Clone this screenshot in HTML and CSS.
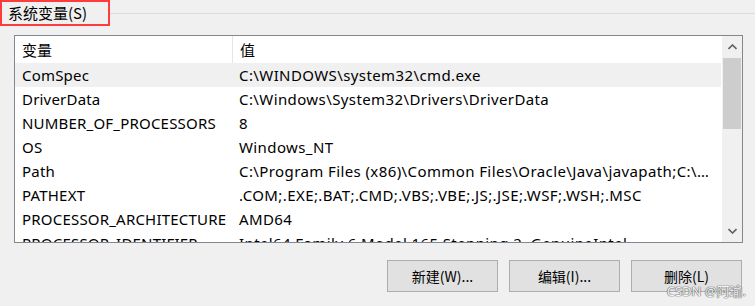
FILE: index.html
```html
<!DOCTYPE html>
<html>
<head>
    <title>系统变量</title>
    <link rel="stylesheet" href="styles.css">
</head>
<body>
    <div class="group-header">
        <span class="group-title">系统变量(S)</span>
        <span class="group-line"></span>
    </div>
    <div class="list">
        <div class="table">
            <div class="row head">
                <div class="cell name">变量</div>
                <div class="cell value">值</div>
            </div>
            <div class="row selected">
                <div class="cell name">ComSpec</div>
                <div class="cell value">C:\WINDOWS\system32\cmd.exe</div>
            </div>
            <div class="row">
                <div class="cell name">DriverData</div>
                <div class="cell value">C:\Windows\System32\Drivers\DriverData</div>
            </div>
            <div class="row">
                <div class="cell name">NUMBER_OF_PROCESSORS</div>
                <div class="cell value">8</div>
            </div>
            <div class="row">
                <div class="cell name">OS</div>
                <div class="cell value">Windows_NT</div>
            </div>
            <div class="row">
                <div class="cell name">Path</div>
                <div class="cell value">C:\Program Files (x86)\Common Files\Oracle\Java\javapath;C:\WINDOWS\system32;C:\WINDOWS</div>
            </div>
            <div class="row">
                <div class="cell name">PATHEXT</div>
                <div class="cell value">.COM;.EXE;.BAT;.CMD;.VBS;.VBE;.JS;.JSE;.WSF;.WSH;.MSC</div>
            </div>
            <div class="row">
                <div class="cell name">PROCESSOR_ARCHITECTURE</div>
                <div class="cell value">AMD64</div>
            </div>
            <div class="row">
                <div class="cell name">PROCESSOR_IDENTIFIER</div>
                <div class="cell value">Intel64 Family 6 Model 165 Stepping 2, GenuineIntel</div>
            </div>
        </div>
        <div class="scrollbar">
            <div class="arrow">
                <svg width="9" height="6" viewBox="0 0 9 6"><path d="M0.5 5 L4.5 1 L8.5 5" fill="none" stroke="#606060" stroke-width="1.6"/></svg>
            </div>
            <div class="thumb"></div>
            <div class="track"></div>
            <div class="arrow">
                <svg width="9" height="6" viewBox="0 0 9 6"><path d="M0.5 1 L4.5 5 L8.5 1" fill="none" stroke="#606060" stroke-width="1.6"/></svg>
            </div>
        </div>
    </div>
    <div class="buttons">
        <button class="btn">新建(W)...</button>
        <button class="btn">编辑(I)...</button>
        <button class="btn">删除(L)</button>
    </div>
    <div class="watermark">CSDN @阿瑜.</div>
</body>
</html>
```

FILE: styles.css
```css
body {
    margin: 0;
    background-color: #f0f0f0;
    font-family: "Noto Sans", "Noto Sans CJK SC", sans-serif;
    font-size: 15px;
    color: #000;
    width: 755px;
    height: 306px;
    overflow: hidden;
    position: relative;
}
.group-header {
    display: flex;
    align-items: center;
    height: 26px;
}
.group-title {
    box-sizing: border-box;
    height: 26px;
    width: 110px;
    padding-left: 6px;
    border: 2px solid #ff3b3b;
    line-height: 21px;
    font-family: "Noto Sans CJK SC", sans-serif;
    font-size: 15px;
}
.group-line {
    flex: 1;
    height: 1px;
    background-color: #dcdcdc;
}
.list {
    box-sizing: border-box;
    margin: 9px 0 0 14px;
    width: 729px;
    height: 208px;
    border: 1px solid #828790;
    background-color: #fff;
    display: flex;
    overflow: hidden;
}
.table {
    flex: 1;
    overflow: hidden;
    padding-right: 1px;
}
.row {
    display: flex;
    height: 24px;
    align-items: center;
    white-space: nowrap;
}
.row.head {
    height: 27px;
    font-family: "Noto Sans CJK SC", sans-serif;
}
.row.selected {
    background-color: #f0f0f0;
}
.cell {
    overflow: hidden;
}
.cell.name {
    width: 210px;
    padding-left: 7px;
    flex-shrink: 0;
    letter-spacing: 0.2px;
}
.cell.value {
    flex: 1;
    padding-left: 7px;
    padding-right: 6px;
    letter-spacing: 0.4px;
    text-overflow: ellipsis;
}
.row.head .cell {
    height: 27px;
    line-height: 27px;
    letter-spacing: 0;
}
.row.head .cell.name {
    border-right: 1px solid #e5e5e5;
}
.scrollbar {
    width: 20px;
    display: flex;
    flex-direction: column;
    background-color: #f0f0f0;
}
.arrow {
    height: 22px;
    display: flex;
    align-items: center;
    justify-content: center;
}
.thumb {
    height: 71px;
    margin: 0 1px;
    background-color: #cdcdcd;
}
.track {
    flex: 1;
}
.buttons {
    display: flex;
    justify-content: flex-end;
    gap: 11px;
    margin: 17px 13px 0 0;
}
.btn {
    width: 111px;
    height: 32px;
    background-color: #e1e1e1;
    border: 1px solid #adadad;
    font-family: "Noto Sans CJK SC", sans-serif;
    font-size: 14px;
    color: #000;
    padding: 0;
}
.watermark {
    position: absolute;
    right: 9px;
    bottom: 6px;
    font-family: "Noto Sans", "Noto Sans CJK SC", sans-serif;
    font-size: 13px;
    color: #f4f4f4;
    text-shadow: 0 0 1px #666, 0 0 1px #666, 0 0 1px #666;
}
```
